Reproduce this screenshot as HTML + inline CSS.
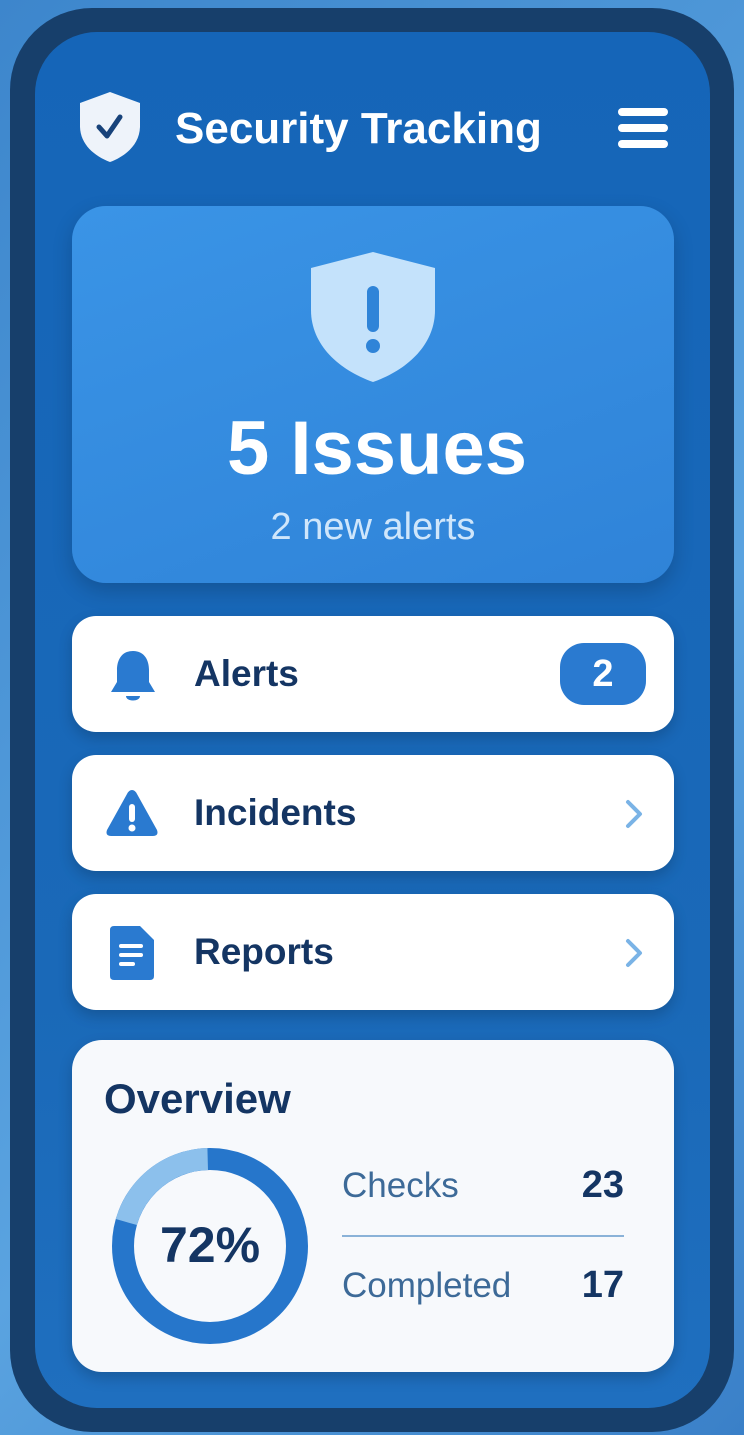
<!DOCTYPE html>
<html><head><meta charset="utf-8"><style>
*{margin:0;padding:0;box-sizing:border-box}
body{width:744px;height:1435px;overflow:hidden;background:linear-gradient(135deg,#3d86cc,#5aa3e0 60%,#3a80c8);font-family:"Liberation Sans",sans-serif;position:relative}
.frame{position:absolute;left:10px;top:8px;width:724px;height:1424px;border-radius:82px;background:#173f6b}
.screen{position:absolute;left:35px;top:32px;width:675px;height:1376px;border-radius:62px;background:linear-gradient(180deg,#1565b8,#1a69b8 70%,#1f6fbf)}
.abs{position:absolute}
.hero{left:72px;top:206px;width:602px;height:377px;border-radius:34px;background:linear-gradient(160deg,#3a94e6,#2f83d8);box-shadow:0 8px 20px rgba(0,0,0,.18)}
.card{position:absolute;left:72px;width:602px;height:116px;border-radius:24px;background:#fff;box-shadow:0 6px 14px rgba(0,0,0,.18)}
.card .t{position:absolute;left:122px;top:37px;font-size:37px;color:#143563;font-weight:bold}
.chev{position:absolute;right:30px;top:44px}
</style></head><body>
<div class="frame"></div>
<div class="screen"></div>
<svg class="abs" style="left:78px;top:90px" width="64" height="74" viewBox="0 0 64 74"><path d="M32 2 L62 13 V36 C62 54 48 66 32 72 C16 66 2 54 2 36 V13 Z" fill="#eef3fa"/><path d="M21 37 L29 46 L42 27" stroke="#17427a" stroke-width="5" fill="none" stroke-linecap="round" stroke-linejoin="round"/></svg>
<div class="abs" style="left:175px;top:104px;font-size:44px;color:#fff;font-weight:bold">Security Tracking</div>
<div class="abs" style="left:618px;top:108px;width:50px;height:8px;border-radius:4px;background:#fff;box-shadow:0 16px 0 #fff,0 32px 0 #fff"></div>
<div class="abs hero"></div>
<svg class="abs" style="left:309px;top:250px" width="128" height="134" viewBox="0 0 128 134"><path d="M64 2 L126 18 V60 C126 95 98 120 64 132 C30 120 2 95 2 60 V18 Z" fill="#c4e2fb"/><rect x="58" y="36" width="12" height="46" rx="6" fill="#2f84d8"/><circle cx="64" cy="96" r="7" fill="#2f84d8"/></svg>
<div class="abs" style="left:76px;width:602px;top:405px;text-align:center;font-size:76px;font-weight:bold;color:#fff">5 Issues</div>
<div class="abs" style="left:72px;width:602px;top:506px;text-align:center;font-size:38px;color:#cfe6fb">2 new alerts</div>

<div class="card" style="top:616px">
<svg class="abs" style="left:36px;top:32px" width="50" height="58" viewBox="0 0 50 58"><path d="M25 3 C13 3 9 13 9 22 V34 L3 44 H47 L41 34 V22 C41 13 37 3 25 3Z" fill="#2a7ad0"/><path d="M18 48 H32 C32 54 18 54 18 48Z" fill="#2a7ad0"/></svg>
<div class="t">Alerts</div>
<div class="abs" style="right:28px;top:27px;width:86px;height:62px;border-radius:24px;background:#2a7ad0;color:#fff;font-size:38px;font-weight:bold;text-align:center;line-height:62px">2</div>
</div>
<div class="card" style="top:755px">
<svg class="abs" style="left:32px;top:32px" width="56" height="52" viewBox="0 0 56 52"><path d="M28 3 Q31 3 33 7 L53 43 Q55 49 49 49 H7 Q1 49 3 43 L23 7 Q25 3 28 3Z" fill="#2a7ad0"/><rect x="25" y="17" width="6" height="18" rx="3" fill="#fff"/><circle cx="28" cy="41" r="3.5" fill="#fff"/></svg>
<div class="t">Incidents</div>
<svg class="chev" width="20" height="30" viewBox="0 0 20 30"><path d="M4 3 L16 15 L4 27" stroke="#7ab3e6" stroke-width="4" fill="none" stroke-linecap="round" stroke-linejoin="round"/></svg>
</div>
<div class="card" style="top:894px">
<svg class="abs" style="left:36px;top:30px" width="48" height="58" viewBox="0 0 48 58"><path d="M6 2 H32 L46 16 V52 Q46 56 42 56 H6 Q2 56 2 52 V6 Q2 2 6 2Z" fill="#2a7ad0"/><rect x="11" y="20" width="24" height="4" rx="2" fill="#fff"/><rect x="11" y="29" width="24" height="4" rx="2" fill="#fff"/><rect x="11" y="38" width="16" height="4" rx="2" fill="#fff"/></svg>
<div class="t">Reports</div>
<svg class="chev" width="20" height="30" viewBox="0 0 20 30"><path d="M4 3 L16 15 L4 27" stroke="#7ab3e6" stroke-width="4" fill="none" stroke-linecap="round" stroke-linejoin="round"/></svg>
</div>

<div class="abs" style="left:72px;top:1040px;width:602px;height:332px;border-radius:30px;background:#f7f9fc;box-shadow:0 6px 14px rgba(0,0,0,.18)"></div>
<div class="abs" style="left:104px;top:1075px;font-size:42px;font-weight:bold;color:#143563">Overview</div>
<svg class="abs" style="left:110px;top:1146px" width="200" height="200" viewBox="0 0 200 200">
<circle cx="100" cy="100" r="87" fill="none" stroke="#2676cb" stroke-width="22"/>
<circle cx="100" cy="100" r="87" fill="none" stroke="#8cc0ec" stroke-width="22" stroke-dasharray="110 600" transform="rotate(196 100 100)"/>
</svg>
<div class="abs" style="left:110px;width:200px;top:1216px;text-align:center;font-size:50px;color:#143563;font-weight:bold">72%</div>
<div class="abs" style="left:342px;top:1166px;font-size:35px;color:#3d6a98">Checks</div>
<div class="abs" style="left:540px;width:84px;text-align:right;top:1164px;font-size:38px;color:#143563;font-weight:bold">23</div>
<div class="abs" style="left:342px;top:1235px;width:282px;height:2px;background:#8ab2d8"></div>
<div class="abs" style="left:342px;top:1266px;font-size:35px;color:#3d6a98">Completed</div>
<div class="abs" style="left:540px;width:84px;text-align:right;top:1264px;font-size:38px;color:#143563;font-weight:bold">17</div>
</body></html>
